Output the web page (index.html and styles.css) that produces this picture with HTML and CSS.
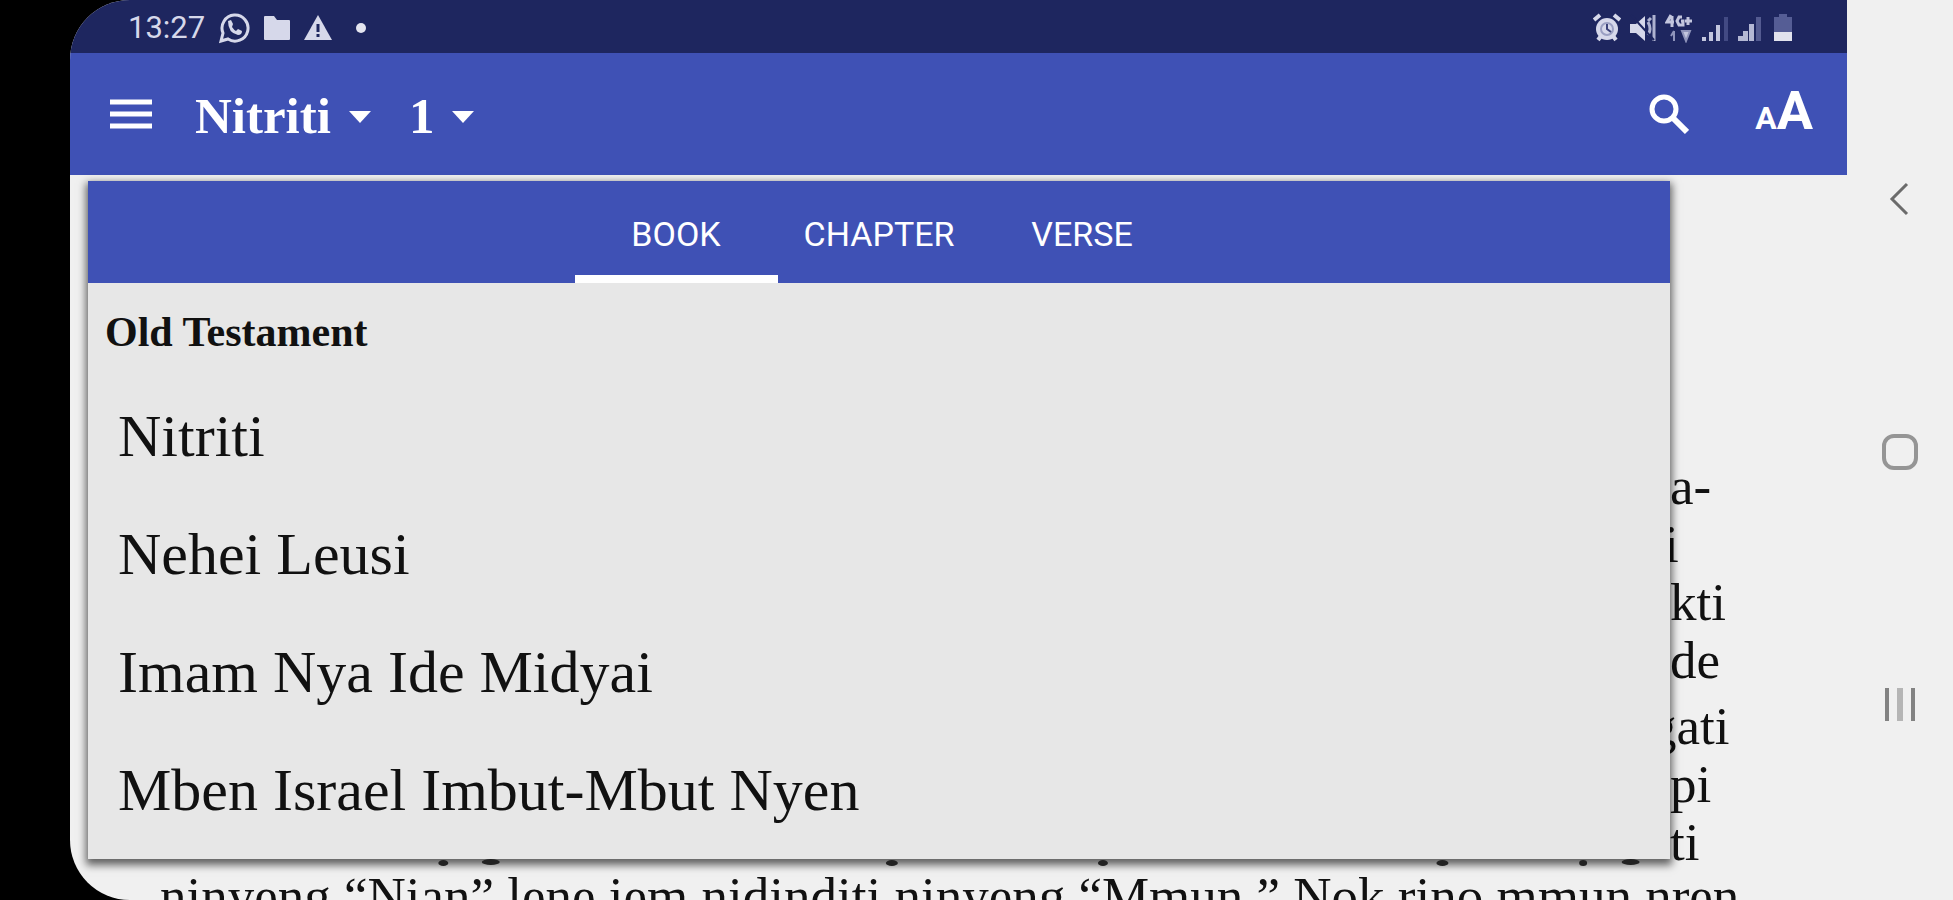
FILE: index.html
```html
<!DOCTYPE html>
<html lang="en">
<head>
    <meta charset="UTF-8">
    <title>Nitriti 1</title>
    <link rel="stylesheet" href="styles.css">
</head>
<body>
<div class="screen">
    <div class="status">
        <span class="time">13:27</span>
        <svg class="s1" width="32" height="32" viewBox="0 0 32 32"><path d="M3 29l2-8a13 13 0 1 1 5 6z" fill="none" stroke="#d6d8ea" stroke-width="3"/><path d="M10 9l3-1 2 4-1 3q2 3 4 4l2-2 4 2q0 4-4 4Q10 21 10 9z" fill="#d6d8ea"/></svg>
        <svg class="s2" width="28" height="26" viewBox="0 0 28 26"><path d="M1 2q0-1 1-1h9l3 4h12q1 0 1 1v18q0 1-1 1H2q-1 0-1-1z" fill="#d6d8ea"/></svg>
        <svg class="s2" width="28" height="26" viewBox="0 0 28 26"><path d="M14 0l14 25H0z" fill="#d6d8ea"/><path d="M14 9v8M14 19v3" stroke="#1e265f" stroke-width="3"/></svg>
        <span class="dot"></span>
        <div class="right">
            <svg width="28" height="30" viewBox="0 0 28 30"><circle cx="14" cy="16" r="11" fill="#d6d8ea"/><path d="M1 7l6-5M27 7l-6-5M5 27l3-4M23 27l-3-4" stroke="#d6d8ea" stroke-width="4"/><circle cx="14" cy="16" r="6" fill="none" stroke="#9a9fc2" stroke-width="2"/><path d="M14 11v5l4 3" fill="none" stroke="#3a4179" stroke-width="2"/></svg>
            <svg width="28" height="30" viewBox="0 0 28 30"><path d="M1 11h6l9-8v25l-9-8H1z" fill="#d6d8ea"/><path d="M19 8l3-3M19 22q4-6 0-13M25 2v26" fill="none" stroke="#aeb2d0" stroke-width="3"/><path d="M2 2l23 25" stroke="#1e265f" stroke-width="2"/></svg>
            <svg width="28" height="30" viewBox="0 0 28 30"><path d="M6 2L2 9h7M7 3v11M17 4h-3l-2 4 2 4h4V8h-2M20 8h7M23 4v8" fill="none" stroke="#c3c6de" stroke-width="3"/><path d="M9 18v10M6 23l3-5M17 18h8l-4 10z" fill="#c3c6de" stroke="#8f94bb" stroke-width="2"/></svg>
            <svg width="28" height="30" viewBox="0 0 28 30"><path d="M1 24h4v4H1zM8 19h4v9H8zM15 12h4v16h-4z" fill="#c3c6de"/><path d="M23 4h4v24h-4z" fill="#424a83"/></svg>
            <svg width="28" height="30" viewBox="0 0 28 30"><path d="M1 23h5v5H1zM6 18h5v10H6zM12 11h5v17h-5z" fill="#b4b8d4"/><path d="M19 4h5v24h-5z" fill="#545b91"/></svg>
            <svg width="20" height="30" viewBox="0 0 20 30"><path d="M1 4h5V1h8v3h5v15H1z" fill="#555d95"/><path d="M1 19h18v9H1z" fill="#e2e3ee"/></svg>
        </div>
    </div>
    <header class="bar">
        <button class="menu" aria-label="Menu"><svg width="42" height="32" viewBox="0 0 42 32"><path d="M0 4h42M0 16h42M0 28h42" stroke="#fff" stroke-width="5"/></svg></button>
        <button class="pick">Nitriti<svg width="22" height="13" viewBox="0 0 22 13"><path d="M0 1h22L11 13z" fill="#fff"/></svg></button>
        <button class="pick">1<svg width="22" height="13" viewBox="0 0 22 13"><path d="M0 1h22L11 13z" fill="#fff"/></svg></button>
        <button class="search" aria-label="Search"><svg width="40" height="42" viewBox="0 0 40 42"><circle cx="15" cy="16" r="12" fill="none" stroke="#fff" stroke-width="5"/><path d="M23 24l15 15" stroke="#fff" stroke-width="6"/></svg></button>
        <button class="size" aria-label="Text size"><small>A</small><span>A</span></button>
    </header>
    <main>
        <div class="row">
            <section class="panel">
                <div class="tabs">
                    <button class="current">BOOK</button>
                    <button>CHAPTER</button>
                    <button>VERSE</button>
                </div>
                <h2>Old Testament</h2>
                <ul>
                    <li><a href="#">Nitriti</a></li>
                    <li><a href="#">Nehei Leusi</a></li>
                    <li><a href="#">Imam Nya Ide Midyai</a></li>
                    <li><a href="#">Mben Israel Imbut-Mbut Nyen</a></li>
                </ul>
            </section>
            <div class="ends">
                <p>a-</p>
                <p class="cut">i</p>
                <p>kti</p>
                <p>de</p>
                <p class="verse cut2">gati</p>
                <p>pi</p>
                <p>ti</p>
            </div>
        </div>
        <!-- descenders of the line under the panel -->
        <svg class="tails" width="100%" height="8"><g fill="#222"><ellipse cx="20.2%" cy="4" rx="5" ry="3"/><ellipse cx="22.9%" cy="3" rx="9" ry="3"/><ellipse cx="45.7%" cy="4" rx="6" ry="3"/><ellipse cx="57.7%" cy="4" rx="5" ry="3"/><ellipse cx="77%" cy="4" rx="6" ry="3"/><ellipse cx="85%" cy="4" rx="4" ry="3"/><ellipse cx="87.7%" cy="3" rx="9" ry="3"/></g></svg>
        <p class="line">ninyeng “Nian” lene iem nidinditi ninyeng “Mmun.” Nok rino mmun nren</p>
    </main>
</div>
<nav class="sys">
    <button aria-label="Back"><svg width="40" height="40" viewBox="0 0 40 40"><path d="M27 5L12 20l15 15" fill="none" stroke="#6b6b6b" stroke-width="3"/></svg></button>
    <button aria-label="Home"><svg width="40" height="40" viewBox="0 0 40 40"><rect x="4" y="4" width="32" height="32" rx="10" fill="none" stroke="#959595" stroke-width="4"/></svg></button>
    <button aria-label="Recent apps"><svg width="40" height="40" viewBox="0 0 40 40"><path d="M7 4v33M33 4v33" stroke="#828282" stroke-width="4"/><path d="M20 4v33" stroke="#b5b5b5" stroke-width="6"/></svg></button>
</nav>
</body>
</html>
```
FILE: styles.css
```css
* {
    padding: 0;
    margin: 0;
    list-style: none;
    border: 0;
    box-sizing: border-box;
}

body {
    display: flex;
    height: 100vh;
    overflow: hidden;
    background: linear-gradient(to right, #000 50%, #f0f0f0 50%);
    font-family: "Liberation Serif", "Times New Roman", serif;
    color: #111;
}

button {
    background: none;
    color: #fff;
    font: inherit;
    cursor: pointer;
}

svg {
    display: block;
}

.screen {
    flex: 1;
    min-width: 0;
    margin-left: 70px;
    background: #f0f0f0;
    border-radius: 60px 0 0 60px;
    overflow: hidden;
}

.status {
    display: flex;
    align-items: center;
    height: 53px;
    padding: 2px 54px 0 58px;
    background: #1e265f;
    color: #d6d8ea;
    font: 31px Roboto, sans-serif;
}

.s1 {
    margin-left: 13px;
}

.s2 {
    margin-left: 13px;
}

.dot {
    width: 10px;
    height: 10px;
    margin-left: 24px;
    border-radius: 50%;
    background: #e4e5f0;
}

.right {
    display: flex;
    gap: 8px;
    margin-left: auto;
}

.bar {
    display: flex;
    align-items: center;
    height: 122px;
    padding: 0 34px 0 40px;
    background: #3f51b5;
}

.menu {
    margin-right: 43px;
}

.pick {
    display: flex;
    align-items: center;
    gap: 18px;
    padding-top: 4px;
    margin-right: 38px;
    font-size: 51px;
    font-weight: bold;
}

.search {
    margin-left: auto;
    margin-right: 66px;
}

.size {
    display: flex;
    align-items: baseline;
    font: bold 54px/64px Roboto, sans-serif;
}

.size small {
    font-size: 32px;
}

main {
    padding: 6px 0 0 18px;
}

.row {
    display: flex;
    align-items: flex-start;
}

.panel {
    flex: 1;
    position: relative;
    z-index: 1;
    padding-bottom: 10px;
    background: #e7e7e7;
    box-shadow: 0 4px 8px 2px rgba(0, 0, 0, 0.6);
}

.tabs {
    display: flex;
    justify-content: center;
    height: 102px;
    background: #3f51b5;
}

.tabs button {
    width: 203px;
    padding-top: 12px;
    border-bottom: 8px solid transparent;
    font: 34px Roboto, sans-serif;
}

.tabs .current {
    border-color: #fff;
}

.panel h2 {
    height: 94px;
    padding-left: 17px;
    font-size: 42px;
    line-height: 98px;
}

.panel li {
    height: 118px;
    padding-left: 30px;
    font-size: 60px;
    line-height: 118px;
}

.panel a {
    color: inherit;
    text-decoration: none;
}

.ends {
    width: 177px;
    padding-top: 276px;
    margin-bottom: -20px;
    font-size: 53px;
    line-height: 58px;
}

.ends .verse {
    padding-top: 8px;
}

.cut {
    text-indent: -6px;
}

.cut2 {
    text-indent: -20px;
}

.tails {
    position: relative;
    z-index: 2;
}

.line {
    padding-left: 72px;
    font-size: 53px;
    line-height: 58px;
    white-space: nowrap;
}

.sys {
    display: flex;
    flex-direction: column;
    align-items: center;
    justify-content: space-between;
    width: 106px;
    padding: 179px 0 176px;
    background: #f0f0f0;
}
```
